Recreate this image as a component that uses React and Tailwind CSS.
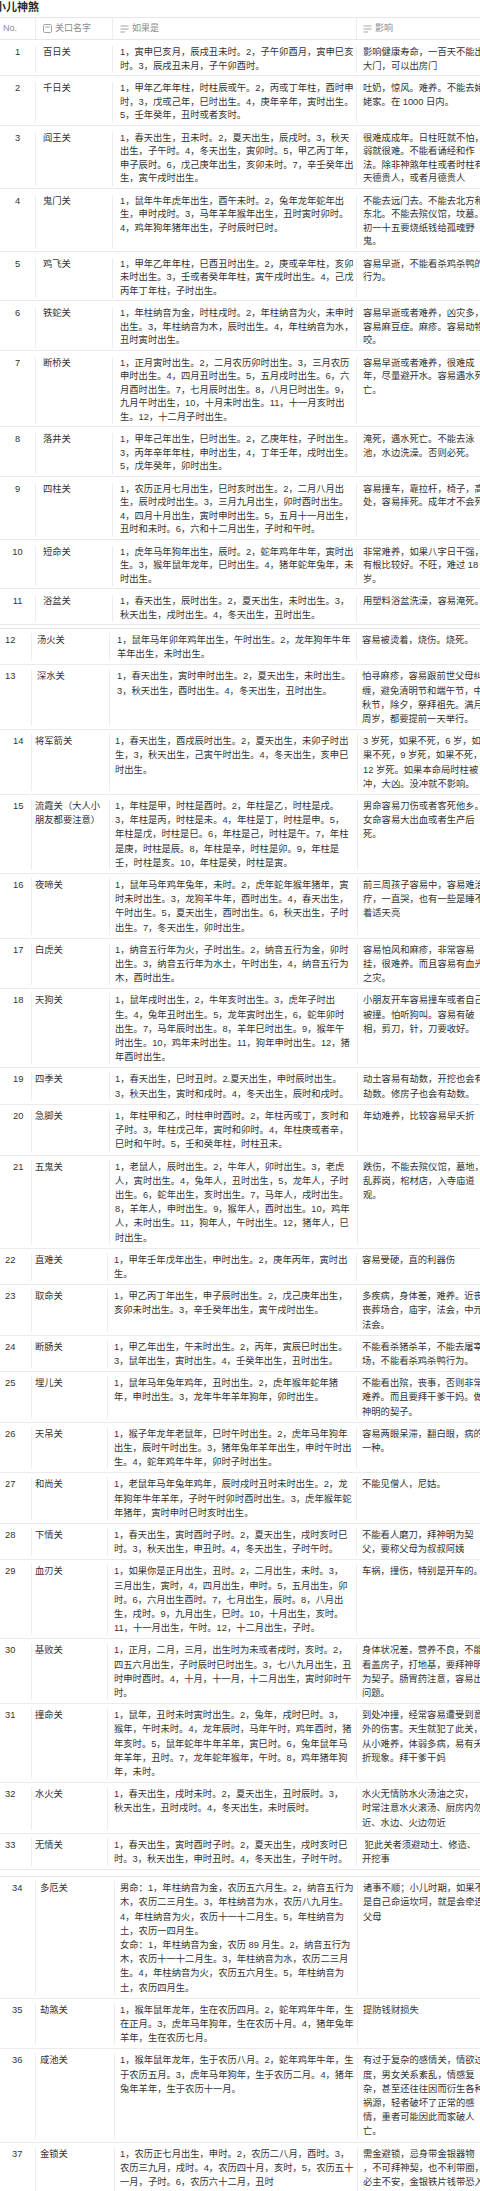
import React from 'react';

// 小儿神煞 table, pieced together from several screenshots, so columns shift a little per block
const segments = [
    {
        key: 'a',
        wrap: '',
        no: 'w-[36px] text-center',
        name: 'w-[77px] pl-[7px]',
        cond: 'w-[244px] pl-[7px]',
        eff: 'pl-[6px]',
        line: 'leading-[13.5px] pt-[6px] pb-[2px]',
        rows: [
            ['1', ['百日关'], ['1，寅申巳亥月，辰戌丑未时。2，子午卯酉月，寅申巳亥', '时。3，辰戌丑未月，子午卯酉时。'], ['影响健康寿命，一百天不能出', '大门，可以出房门']],
            ['2', ['千日关'], ['1，甲年乙年年柱，时柱辰或午。2，丙或丁年柱，酉时申', '时，3，戊或己年，巳时出生。4，庚年辛年，寅时出生。', '5，壬年癸年，丑时或者亥时。'], ['吐奶，惊风。难养。不能去姥', '姥家。在 1000 日内。']],
            ['3', ['阎王关'], ['1，春天出生，丑未时。2，夏天出生，辰戌时。3，秋天', '出生，子午时。4，冬天出生，寅卯时。5，甲乙丙丁年，', '申子辰时。6，戊己庚年出生，亥卯未时。7，辛壬癸年出', '生，寅午戌时出生。'], ['很难成成年。日柱旺就不怕，', '弱就很难。不能看诵经和作', '法。除非神煞年柱或者时柱有', '天德贵人，或者月德贵人']],
            ['4', ['鬼门关'], ['1，鼠年牛年虎年出生，酉午未时。2，兔年龙年蛇年出', '生，申时戌时。3，马年羊年猴年出生，丑时寅时卯时。', '4，鸡年狗年猪年出生，子时辰时巳时。'], ['不能去远门去。不能去北方和', '东北。不能去殡仪馆，坟墓。', '初一十五要烧纸钱给孤魂野', '鬼。']],
            ['5', ['鸡飞关'], ['1，甲年乙年年柱，巳酉丑时出生。2，庚或辛年柱，亥卯', '未时出生。3，壬或者癸年年柱，寅午戌时出生。4，己戊', '丙年丁年柱，子时出生。'], ['容易早逝，不能看杀鸡杀鸭的', '行为。']],
            ['6', ['铁蛇关'], ['1，年柱纳音为金，时柱戌时。2，年柱纳音为火，未申时', '出生。3，年柱纳音为木，辰时出生。4，年柱纳音为水，', '丑时寅时出生。'], ['容易早逝或者难养，凶灾多，', '容易麻豆症。麻疹。容易动物', '咬。']],
            ['7', ['断桥关'], ['1，正月寅时出生。2，二月农历卯时出生。3，三月农历', '申时出生。4，四月丑时出生。5，五月戌时出生。6，六', '月酉时出生。7，七月辰时出生。8，八月巳时出生。9，', '九月午时出生，10，十月未时出生。11，十一月亥时出', '生。12，十二月子时出生。'], ['容易早逝或者难养，很难成', '年，尽量避开水。容易遇水死', '亡。']],
            ['8', ['落井关'], ['1，甲年己年出生，巳时出生。2，乙庚年柱，子时出生。', '3，丙年辛年年柱，申时出生，4，丁年壬年，戌时出生。', '5，戊年癸年，卯时出生。'], ['淹死，遇水死亡。不能去泳', '池，水边洗澡。否则必死。']],
            ['9', ['四柱关'], ['1，农历正月七月出生，巳时亥时出生。2，二月八月出', '生，辰时戌时出生。3，三月九月出生，卯时酉时出生。', '4，四月十月出生，寅时申时出生。5，五月十一月出生，', '丑时和未时。6，六和十二月出生，子时和午时。'], ['容易撞车，靠拉杆，椅子，高', '处，容易摔死。成年才不会死']],
            ['10', ['短命关'], ['1，虎年马年狗年出生，辰时。2，蛇年鸡年牛年，寅时出', '生。3，猴年鼠年龙年，巳时出生。4，猪年蛇年兔年，未', '时出生。'], ['非常难养，如果八字日干强，', '有根比较好。不旺，难过 18', '岁。']],
            ['11', ['浴盆关'], ['1，春天出生，辰时出生。2，夏天出生，未时出生。3，', '秋天出生，戌时出生。4，冬天出生，丑时出生。'], ['用塑料浴盆洗澡，容易淹死。']],
        ],
    },
    {
        key: 'b',
        wrap: 'mt-[3px] border-t border-[#e4e4e4]',
        no: 'w-[32px] pl-[5px]',
        name: 'w-[78px] pl-[5px]',
        cond: 'w-[247px] pl-[7px]',
        eff: 'pl-[5px]',
        line: 'leading-[14.2px] pt-[4px] pb-[3px]',
        rows: [
            ['12', ['汤火关'], ['1，鼠年马年卯年鸡年出生，午时出生。2，龙年狗年牛年', '羊年出生，未时出生。'], ['容易被烫着，烧伤。烧死。']],
            ['13', ['深水关'], ['1，春天出生，寅时申时出生。2，夏天出生，未时出生。', '3，秋天出生，酉时出生。4，冬天出生，丑时出生。'], ['怕寻麻疹，容易跟前世父母纠', '缠，避免清明节和端午节，中', '秋节，除夕，祭拜祖先。满月', '周岁，都要提前一天举行。']],
        ],
    },
    {
        key: 'c',
        wrap: '',
        no: 'w-[32px] pl-[13px]',
        name: 'w-[78px] pl-[3px]',
        cond: 'w-[248px] pl-[5px]',
        eff: 'pl-[5px]',
        line: 'leading-[14.2px] pt-[4px] pb-[3px]',
        rows: [
            ['14', ['将军箭关'], ['1，春天出生，酉戌辰时出生。2，夏天出生，未卯子时出', '生，3，秋天出生，己寅午时出生。4，冬天出生，亥申巳', '时出生。'], ['3 岁死，如果不死，6 岁，如', '果不死，9 岁死，如果不死，', '12 岁死。如果本命局时柱被', '冲，大凶。没冲就不影响。']],
            ['15', ['流霞关（大人小', '朋友都要注意）'], ['1，年柱是甲，时柱是酉时。2，年柱是乙，时柱是戌。', '3，年柱是丙，时柱是未。4，年柱是丁，时柱是申。5，', '年柱是戊，时柱是巳。6，年柱是己，时柱是午。7，年柱', '是庚，时柱是辰。8，年柱是辛，时柱是卯。9，年柱是', '壬，时柱是亥。10，年柱是癸，时柱是寅。'], ['男命容易刀伤或者客死他乡。', '女命容易大出血或者生产后', '死。']],
            ['16', ['夜啼关'], ['1，鼠年马年鸡年兔年，未时。2，虎年蛇年猴年猪年，寅', '时未时出生。3，龙狗羊牛年，酉时出生。4，春天出生，', '午时出生。5，夏天出生，酉时出生。6，秋天出生，子时', '出生。7，冬天出生，卯时出生。'], ['前三周孩子容易中，容易难治', '疗，一直哭，也有一些是睡不', '着适天亮']],
            ['17', ['白虎关'], ['1，纳音五行年为火，子时出生。2，纳音五行为金，卯时', '出生。3，纳音五行年为水土，午时出生，4，纳音五行为', '木，酉时出生。'], ['容易怕风和麻疹，非常容易', '挂，很难养。而且容易有血光', '之灾。']],
            ['18', ['天狗关'], ['1，鼠年戌时出生，2，牛年亥时出生。3，虎年子时出', '生。4，兔年丑时出生。5，龙年寅时出生，6，蛇年卯时', '出生。7，马年辰时出生。8，羊年巳时出生。9，猴年午', '时出生。10，鸡年未时出生。11，狗年申时出生。12，猪', '年酉时出生。'], ['小朋友开车容易撞车或者自己', '被撞。怕听狗叫。容易有破', '相，剪刀，针，刀要收好。']],
            ['19', ['四季关'], ['1，春天出生，巳时丑时。2.夏天出生，申时辰时出生。', '3，秋天出生，寅时和戌时。4，冬天出生，辰时和戌时。'], ['动土容易有劫数，开挖也会有', '劫数。修房子也会有劫数。']],
            ['20', ['急脚关'], ['1，年柱甲和乙，时柱申时酉时。2，年柱丙或丁，亥时和', '子时。3，年柱戊己年，寅时和卯时。4，年柱庚或者辛，', '巳时和午时。5，壬和癸年柱，时柱丑未。'], ['年幼难养，比较容易早夭折']],
            ['21', ['五鬼关'], ['1，老鼠人，辰时出生。2，牛年人，卯时出生。3，老虎', '人，寅时出生。4，兔年人，丑时出生，5，龙年人，子时', '出生。6，蛇年出生，亥时出生。7，马年人，戌时出生。', '8，羊年人，申时出生。9，猴年人，酉时出生。10，鸡年', '人，未时出生。11，狗年人，午时出生。12，猪年人，巳', '时出生。'], ['跌伤，不能去殡仪馆，墓地，', '乱葬岗，棺材店，入寺庙道', '观。']],
        ],
    },
    {
        key: 'd',
        wrap: '',
        no: 'w-[32px] pl-[5px]',
        name: 'w-[76px] pl-[3px]',
        cond: 'w-[249px] pl-[6px]',
        eff: 'pl-[5px]',
        line: 'leading-[14.2px] pt-[4px] pb-[3px]',
        rows: [
            ['22', ['直难关'], ['1，甲年壬年戊年出生，申时出生。2，庚年丙年，寅时出', '生。'], ['容易受硬，直的利器伤']],
            ['23', ['取命关'], ['1，甲乙丙丁年出生，申子辰时出生。2，戊己庚年出生，', '亥卯未时出生。3，辛壬癸年出生，寅午戌时出生。'], ['多疾病，身体差，难养。近丧', '丧葬场合，庙宇，法会，中元', '法会。']],
            ['24', ['断肠关'], ['1，甲乙年出生，午未时出生。2，丙年，寅辰巳时出生。', '3，鼠年出生，寅时出生。4，壬癸年出生，丑时出生。'], ['不能看杀猪杀羊，不能去屠宰', '场，不能看杀鸡杀鸭行为。']],
            ['25', ['埋儿关'], ['1，鼠年马年兔年鸡年，丑时出生。2，虎年猴年蛇年猪', '年，申时出生。3，龙年牛年羊年狗年，卯时出生。'], ['不能看出殡，丧事，否则非常', '难养。而且要拜干爹干妈。做', '神明的契子。']],
            ['26', ['天吊关'], ['1，猴子年龙年老鼠年，巳时午时出生。2，虎年马年狗年', '出生，辰时午时出生。3，猪年兔年羊年出生，申时午时出', '生。4，蛇年鸡年牛年，卯时子时出生。'], ['容易两眼呆滞，翻白眼，病的', '一种。']],
            ['27', ['和尚关'], ['1，老鼠年马年兔年鸡年，辰时戌时丑时未时出生。2，龙', '年狗年牛年羊年，子时午时卯时酉时出生。3，虎年猴年蛇', '年猪年，寅时申时巳时亥时出生。'], ['不能见僧人，尼姑。']],
            ['28', ['下情关'], ['1，春天出生，寅时酉时子时。2，夏天出生，戌时亥时巳', '时。3，秋天出生，申丑时。4，冬天出生，子时午时。'], ['不能看人磨刀，拜神明为契', '父，要称父母为叔叔阿姨']],
            ['29', ['血刃关'], ['1，如果你是正月出生，丑时。2，二月出生，未时。3，', '三月出生，寅时，4，四月出生，申时。5，五月出生，卯', '时。6，六月出生酉时。7，七月出生，辰时。8，八月出', '生，戌时。9，九月出生，巳时。10，十月出生，亥时。', '11，十一月出生，午时。12，十二月出生，子时。'], ['车祸，撞伤，特别是开车的。']],
            ['30', ['基败关'], ['1，正月，二月，三月，出生时为未或者戌时，亥时。2，', '四五六月出生，子时辰时巳时出生。3，七八九月出生，丑', '时申时酉时。4，十月，十一月，十二月出生，寅时卯时午', '时。'], ['身体状况差，营养不良，不能', '看盖房子，打地基，要拜神明', '为契子。肠胃药注意，容易出', '问题。']],
            ['31', ['撞命关'], ['1，鼠年，丑时未时寅时出生。2，兔年，戌时巳时。3，', '猴年，午时未时。4，龙年辰时，马年午时，鸡年酉时，猪', '年亥时。5，鼠年蛇年牛年羊年，寅巳时。6，兔年鼠年马', '年羊年，丑时。7，龙年蛇年猴年，午时。8，鸡年猪年狗', '年，未时。'], ['到处冲撞，经常容易遭受到意', '外的伤害。天生就犯了此关，', '从小难养，体弱多病，易有夭', '折现象。拜干爹干妈']],
            ['32', ['水火关'], ['1，春天出生，戌时未时。2，夏天出生，丑时辰时。3，', '秋天出生，丑时戌时。4，冬天出生，未时辰时。'], ['水火无情防水火汤油之灾，', '时常注意水火滚汤、厨房内勿', '近、水边、火边勿近']],
            ['33', ['无情关'], ['1，春天出生，寅时酉时子时。2，夏天出生，戌时亥时巳', '时。3，秋天出生，申时丑时。4，冬天出生，子时午时。'], ['\u00a0犯此关者须避动土、修造、', '开挖事']],
        ],
    },
    {
        key: 'e',
        wrap: 'mt-[6px] border-t border-[#e4e4e4]',
        no: 'w-[36px] pl-[12px]',
        name: 'w-[79px] pl-[4px]',
        cond: 'w-[243px] pl-[5px]',
        eff: 'pl-[5px]',
        line: 'leading-[14.2px] pt-[4px] pb-[3px]',
        rows: [
            ['34', ['多厄关'], ['男命：1，年柱纳音为金，农历五六月生。2，纳音五行为', '木，农历二三月生。3，年柱纳音为水，农历八九月生。', '4，年柱纳音为火，农历十一十二月生。5，年柱纳音为', '土，农历一四月生。', '女命：1，年柱纳音为金，农历 89 月生。2，纳音五行为', '木，农历十一十二月生。3，年柱纳音为水，农历二三月', '生。4，年柱纳音为火，农历五六月生。5，年柱纳音为', '土，农历四月生。'], ['诸事不顺；小儿时期，如果不', '是自己命运坎坷，就是会牵连', '父母']],
            ['35', ['劫煞关'], ['1，猴年鼠年龙年，生在农历四月。2，蛇年鸡年牛年，生', '在正月。3，虎年马年狗年，生在农历十月。4，猪年兔年', '羊年，生在农历七月。'], ['提防钱财损失']],
            ['36', ['咸池关'], ['1，猴年鼠年龙年，生于农历八月。2，蛇年鸡年牛年，生', '于农历五月。3，虎年马年狗年，生于农历二月。4，猪年', '兔年羊年，生于农历十一月。'], ['有过于复杂的感情关，情欲过', '度，男女关系紊乱，情感复', '杂，甚至还往往因而衍生各种', '祸源，轻者破坏了正常的感', '情，重者可能因此而家破人', '亡。']],
            ['37', ['金锁关'], ['1，农历正七月出生，申时。2，农历二八月，酉时。3，', '农历三九月，戌时。4，农历四十月，亥时，5，农历五十', '一月，子时。6，农历六十二月，丑时'], ['需金避锁，忌身带金银器物', '，不可拜神契，也不利带圈，', '必主不安，金银铁片钱带恐入', '口中，或生疮疥之害']],
        ],
    },
];

const Lines = ({ lines }) => lines.map((l, i) => (
    <div key={i} className="whitespace-nowrap">{l}</div>
));

const TextIcon = () => (
    <svg width="9" height="9" viewBox="0 0 9 9" className="shrink-0">
        <rect x="0.5" y="0.5" width="8" height="8" rx="1.2" fill="none" stroke="#9a9a9a" strokeWidth="0.9" />
        <line x1="2.2" y1="3" x2="6.8" y2="3" stroke="#9a9a9a" strokeWidth="0.9" />
    </svg>
);

const LinesIcon = () => (
    <svg width="9" height="8" viewBox="0 0 9 8" className="shrink-0">
        <line x1="0.5" y1="1" x2="8.5" y2="1" stroke="#9a9a9a" strokeWidth="0.9" />
        <line x1="0.5" y1="4" x2="8.5" y2="4" stroke="#9a9a9a" strokeWidth="0.9" />
        <line x1="0.5" y1="7" x2="5" y2="7" stroke="#9a9a9a" strokeWidth="0.9" />
    </svg>
);

const Segment = ({ seg }) => (
    <div className={seg.wrap}>
        {seg.rows.map(([no, name, cond, eff]) => (
            <div key={no} className={`flex border-b border-[#ebebeb] ${seg.line}`}>
                <div className={`${seg.no} shrink-0 border-r border-[#ededed]`}>{no}</div>
                <div className={`${seg.name} shrink-0 border-r border-[#ededed]`}><Lines lines={name} /></div>
                <div className={`${seg.cond} shrink-0 border-r border-[#ededed]`}><Lines lines={cond} /></div>
                <div className={`${seg.eff} flex-1 min-w-0`}><Lines lines={eff} /></div>
            </div>
        ))}
    </div>
);

export default function App() {
    return (
        <div
            className="w-[480px] h-[2191px] overflow-hidden bg-white text-[#333] text-[9.3px]"
            style={{ fontFamily: '"Liberation Sans", "Noto Sans CJK SC", sans-serif' }}
        >
            <div className="h-[17px] ml-[-5px] pt-[1px] text-[11px] leading-[13px] font-bold text-[#2a2a2a]">小儿神煞</div>
            <div className="flex h-[23px] items-center border-y border-[#e6e6e6] text-[9px] text-[#8c8c8c]">
                <div className="w-[36px] h-full flex items-center pl-[3px] border-r border-[#ededed]">No.</div>
                <div className="w-[77px] h-full flex items-center gap-[3px] pl-[7px] border-r border-[#ededed]"><TextIcon />关口名字</div>
                <div className="w-[244px] h-full flex items-center gap-[3px] pl-[7px] border-r border-[#ededed]"><LinesIcon />如果是</div>
                <div className="flex-1 h-full flex items-center gap-[3px] pl-[6px]"><LinesIcon />影响</div>
            </div>
            {segments.map((seg) => <Segment key={seg.key} seg={seg} />)}
        </div>
    );
}
